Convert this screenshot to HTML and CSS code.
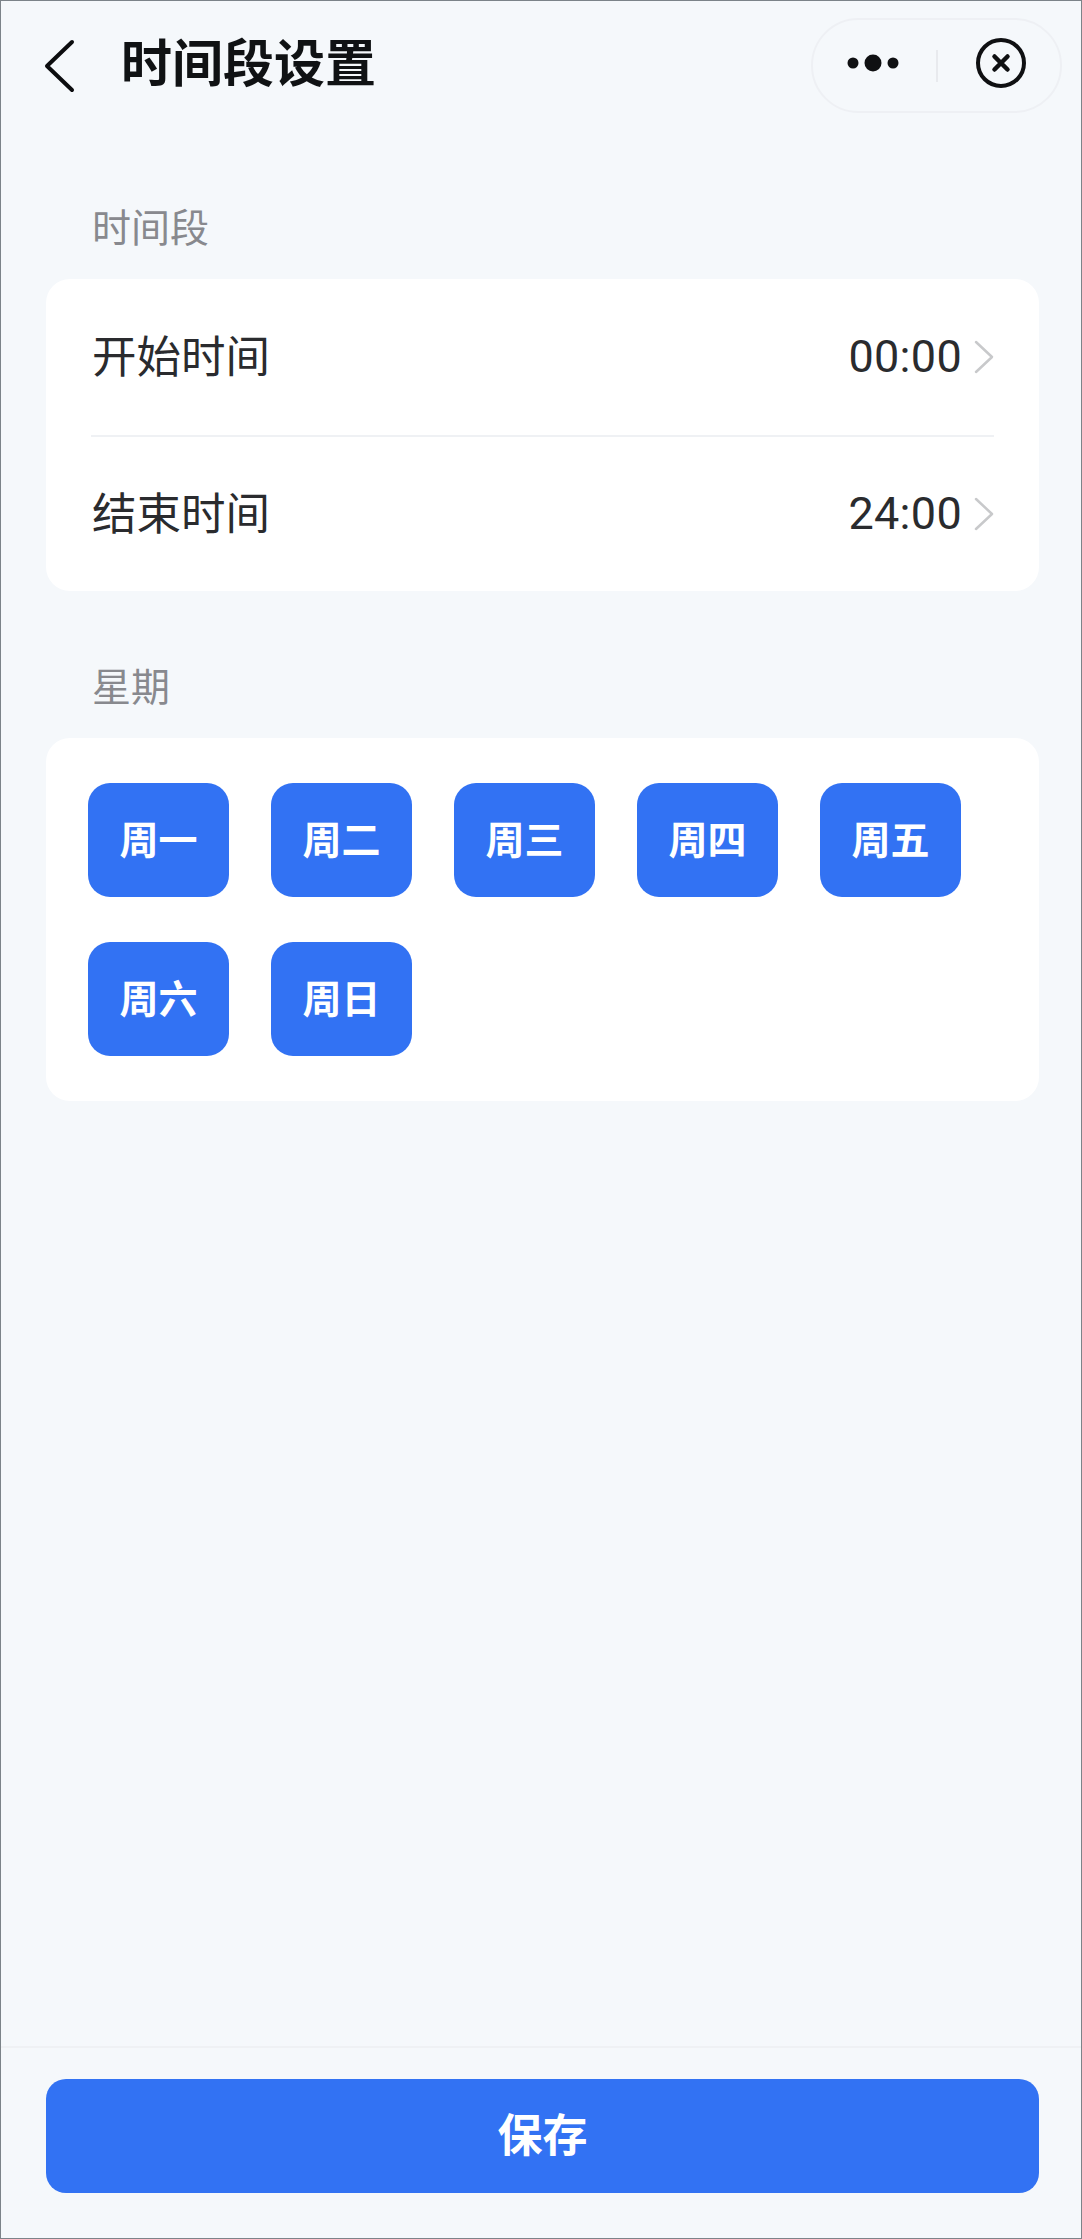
FILE: index.html
```html
<!DOCTYPE html>
<html lang="zh-CN">
<head>
    <meta charset="UTF-8">
    <meta name="viewport" content="width=device-width, initial-scale=1.0">
    <title>时间段设置</title>
    <link rel="stylesheet" href="styles.css">
</head>
<body>
    <div class="page">
        <header class="nav">
            <svg class="back-icon" width="32" height="54" viewBox="0 0 32 54">
                <path d="M28 3 L3 27 L28 51" fill="none" stroke="#0c0d0f" stroke-width="4" stroke-linecap="round" stroke-linejoin="round"/>
            </svg>
            <h1 class="nav-title">时间段设置</h1>
            <div class="capsule">
                <svg class="more-icon" width="54" height="18" viewBox="0 0 54 18">
                    <circle cx="6" cy="9" r="5.5" fill="#0f1012"/>
                    <circle cx="26" cy="9" r="8.5" fill="#0f1012"/>
                    <circle cx="46" cy="9" r="5.5" fill="#0f1012"/>
                </svg>
                <span class="capsule-line"></span>
                <svg class="close-icon" width="52" height="52" viewBox="0 0 52 52">
                    <circle cx="26" cy="26" r="23" fill="none" stroke="#0f1012" stroke-width="4"/>
                    <path d="M19.5 19.5 L32.5 32.5 M32.5 19.5 L19.5 32.5" fill="none" stroke="#0f1012" stroke-width="4.5" stroke-linecap="round"/>
                </svg>
            </div>
        </header>

        <div class="section-label">时间段</div>
        <section class="card time-card">
            <div class="row">
                <span class="row-label">开始时间</span>
                <span class="row-value">00:00</span>
                <svg class="row-arrow" width="20" height="34" viewBox="0 0 20 34">
                    <path d="M2 2 L18 17 L2 32" fill="none" stroke="#c8c9cb" stroke-width="2.5" stroke-linecap="round" stroke-linejoin="round"/>
                </svg>
            </div>
            <div class="row row-next">
                <span class="row-label">结束时间</span>
                <span class="row-value">24:00</span>
                <svg class="row-arrow" width="20" height="34" viewBox="0 0 20 34">
                    <path d="M2 2 L18 17 L2 32" fill="none" stroke="#c8c9cb" stroke-width="2.5" stroke-linecap="round" stroke-linejoin="round"/>
                </svg>
            </div>
        </section>

        <div class="section-label week-label">星期</div>
        <section class="card week-card">
            <button class="day-btn">周一</button>
            <button class="day-btn">周二</button>
            <button class="day-btn">周三</button>
            <button class="day-btn">周四</button>
            <button class="day-btn">周五</button>
            <button class="day-btn">周六</button>
            <button class="day-btn">周日</button>
        </section>

        <footer class="footer">
            <button class="save-btn">保存</button>
        </footer>
    </div>
</body>
</html>
```

FILE: styles.css
```css
* {
    box-sizing: border-box;
}
body {
    margin: 0;
    font-family: "Noto Sans CJK SC", "Noto Sans", sans-serif;
}
.page {
    display: flex;
    flex-direction: column;
    width: 1082px;
    height: 2239px;
    background-color: #f5f8fb;
    border: 1px solid #7c8389;
}
.nav {
    display: flex;
    height: 201px;
    padding-top: 17px;
}
.back-icon {
    margin: 21px 0 0 43px;
}
.nav-title {
    margin: 0 0 0 45px;
    font-size: 51px;
    font-weight: 700;
    line-height: 84px;
    color: #101214;
}
.capsule {
    display: flex;
    align-items: flex-start;
    width: 251px;
    height: 95px;
    margin-left: auto;
    margin-right: 19px;
    border: 2px solid #eef0f4;
    border-radius: 48px;
}
.more-icon {
    margin: 34px 0 0 34px;
}
.capsule-line {
    width: 2px;
    height: 32px;
    margin: 30px 0 0 35px;
    background-color: #e8eaee;
}
.close-icon {
    margin: 17px 0 0 37px;
}
.section-label {
    height: 50px;
    padding-left: 91px;
    font-size: 39px;
    line-height: 46px;
    color: #88898e;
}
.card {
    margin: 27px 42px 0 45px;
    background-color: #fff;
    border-radius: 24px;
}
.time-card {
    height: 312px;
    padding: 0 45px;
}
.row {
    display: flex;
    align-items: center;
    height: 156px;
}
.row-next {
    border-top: 2px solid #eff1f4;
}
.row-label {
    padding: 0 0 6px 1px;
    font-size: 44.5px;
    line-height: 60px;
    color: #2a2b2e;
}
.row-value {
    margin-left: auto;
    font-family: Roboto, sans-serif;
    font-size: 45px;
    line-height: 60px;
    letter-spacing: 0.3px;
    color: #2a2b2e;
}
.row-arrow {
    margin-left: 12px;
}
.week-label {
    margin-top: 70px;
}
.week-card {
    display: flex;
    flex-wrap: wrap;
    gap: 45px 42px;
    height: 363px;
    padding: 45px 42px;
}
.day-btn {
    width: 141px;
    height: 114px;
    padding: 0 0 6px;
    font-family: inherit;
    font-size: 39px;
    font-weight: 700;
    color: #fff;
    background-color: #3272f3;
    border: none;
    border-radius: 22px;
}
.footer {
    margin-top: auto;
    padding: 31px 42px 45px 45px;
    border-top: 2px solid #eff1f4;
}
.save-btn {
    display: block;
    width: 100%;
    height: 114px;
    padding: 0 0 7px;
    font-family: inherit;
    font-size: 45px;
    font-weight: 700;
    color: #fff;
    background-color: #3272f3;
    border: none;
    border-radius: 20px;
}
```
